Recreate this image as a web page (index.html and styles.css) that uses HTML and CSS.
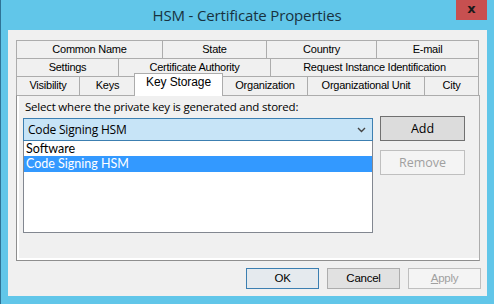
FILE: index.html
```html
<!DOCTYPE html>
<html lang="en">
<head>
    <meta charset="UTF-8">
    <title>HSM - Certificate Properties</title>
    <link rel="stylesheet" href="styles.css">
</head>
<body>
    <div class="window">
        <div class="titlebar">
            <span></span>
            <div class="title">HSM - Certificate Properties</div>
            <div class="close-btn">x</div>
        </div>

        <div class="client">
            <!-- tab rows, back to front -->
            <div class="tabs">
                <div class="tab-row">
                    <div class="tab" style="width:146px">Common Name</div>
                    <div class="tab" style="width:104px">State</div>
                    <div class="tab" style="width:110px">Country</div>
                    <div class="tab">E-mail</div>
                </div>
                <div class="tab-row">
                    <div class="tab" style="width:102px">Settings</div>
                    <div class="tab" style="width:152px">Certificate Authority</div>
                    <div class="tab">Request Instance Identification</div>
                </div>
                <div class="tab-row">
                    <div class="tab" style="width:63px">Visibility</div>
                    <div class="tab" style="width:56px">Keys</div>
                    <div class="tab selected" style="width:89px">Key Storage</div>
                    <div class="tab" style="width:85px">Organization</div>
                    <div class="tab" style="width:117px">Organizational Unit</div>
                    <div class="tab">City</div>
                </div>
            </div>

            <div class="panel">
                <div class="prompt">Select where the private key is generated and stored:</div>
                <div class="panel-body">
                    <div class="combo-wrap">
                        <div class="combo">
                            <span>Code Signing HSM</span>
                            <svg class="chevron" width="9" height="6" viewBox="0 0 9 6">
                                <path d="M1 1 L4.5 4.5 L8 1" fill="none" stroke="#444" stroke-width="1.4"/>
                            </svg>
                        </div>
                        <div class="dropdown">
                            <div class="option">Software</div>
                            <div class="option active">Code Signing HSM</div>
                        </div>
                    </div>
                    <div class="side-buttons">
                        <div class="btn btn-add">Add</div>
                        <div class="btn disabled">Remove</div>
                    </div>
                </div>
            </div>

            <div class="footer">
                <div class="btn default">OK</div>
                <div class="btn">Cancel</div>
                <div class="btn disabled"><u>A</u>pply</div>
            </div>
        </div>
    </div>
</body>
</html>
```

FILE: styles.css
```css
body {
    margin: 0;
    font-family: "Open Sans", "Noto Sans", sans-serif;
}
.window {
    width: 494px;
    height: 304px;
    box-sizing: border-box;
    background: #61c6e9;
    border-left: 1px solid #2f7396;
    display: flex;
    flex-direction: column;
}
.titlebar {
    height: 30px;
    display: grid;
    grid-template-columns: 1fr auto 1fr;
    align-items: start;
}
.title {
    margin-top: 5px;
    margin-left: -1px;
    font-size: 15px;
    letter-spacing: -0.15px;
    color: #18323f;
}
.close-btn {
    justify-self: end;
    width: 31px;
    height: 20px;
    margin-right: 7px;
    background: #c75050;
    color: #1a1a1a;
    font-family: "DejaVu Sans", sans-serif;
    font-weight: bold;
    font-size: 13px;
    line-height: 17px;
    text-align: center;
}
.client {
    margin: 0 7px;
    height: 266px;
    background: #f0f0f0;
    box-sizing: border-box;
    padding: 10px 6px 0 8px;
}

/* tabs */
.tabs {
    width: 464px;
    font-family: "Liberation Sans", Arial, sans-serif;
    font-size: 11px;
    color: #000;
}
.tab-row {
    display: flex;
    height: 18px;
}
.tab-row:last-child {
    height: 19px;
}
.tab {
    box-sizing: border-box;
    border: 1px solid #acacac;
    border-right: none;
    border-bottom: none;
    background: #f0f0f0;
    text-align: center;
    line-height: 17px;
    white-space: nowrap;
    letter-spacing: -0.25px;
}
.tab:last-child {
    flex: 1;
    margin-right: 1px;
    border-right: 1px solid #acacac;
}
.tab.selected {
    position: relative;
    z-index: 1;
    height: 23px;
    margin: -3px -1px 0 -1px;
    border-right: 1px solid #acacac;
    background: #fff;
    line-height: 17px;
    font-size: 12px;
    letter-spacing: -0.1px;
}

.panel {
    width: 464px;
    height: 166px;
    box-sizing: border-box;
    border: 1px solid #acacac;
    border-left-color: #8e8e8e;
    border-bottom-color: #8e8e8e;
    box-shadow: inset 2px -2px 0 #fff;
    padding: 3px 0 0 6px;
    font-size: 11.5px;
}
.prompt {
    padding-left: 2px;
    height: 19px;
    letter-spacing: -0.2px;
    color: #000;
}
.panel-body {
    display: flex;
    gap: 7px;
}
.combo-wrap {
    width: 350px;
}
.combo {
    height: 23px;
    box-sizing: border-box;
    border: 1px solid #3c7fb1;
    background: #c7e4f7;
    display: flex;
    align-items: center;
    justify-content: space-between;
    padding: 0 6px 0 4px;
    font-size: 12px;
    letter-spacing: -0.2px;
}
.dropdown {
    height: 92px;
    box-sizing: border-box;
    border: 1px solid #828790;
    border-top: none;
    background: #fff;
}
.option {
    height: 15px;
    line-height: 15px;
    padding-left: 2px;
    font-family: Lato, "Open Sans", sans-serif;
    font-size: 12.5px;
    overflow: hidden;
}
.option.active {
    background: #3399ff;
    color: #fff;
    height: 16px;
}
.side-buttons {
    display: flex;
    flex-direction: column;
    gap: 9px;
    margin-top: -2px;
}
.btn {
    width: 73px;
    height: 21px;
    box-sizing: border-box;
    border: 1px solid #adadad;
    background: #e1e1e1;
    text-align: center;
    line-height: 19px;
    font-family: "Liberation Sans", Arial, sans-serif;
    font-size: 11.5px;
    letter-spacing: -0.25px;
    color: #000;
}
.side-buttons .btn {
    width: 85px;
    height: 25px;
    line-height: 23px;
    font-family: "Open Sans", "Noto Sans", sans-serif;
    font-size: 12.5px;
    letter-spacing: 0;
}
.btn-add {
    border-color: #707070;
    background: #dcdcdc;
}
.btn.default {
    border-color: #3c7fb1;
    background: #e5eaee;
}
.btn.disabled {
    border-color: #bfbfbf;
    background: #f4f4f4;
    color: #a0a0a0;
}
.footer {
    display: flex;
    justify-content: flex-end;
    gap: 8px;
    margin-top: 7px;
}
```
